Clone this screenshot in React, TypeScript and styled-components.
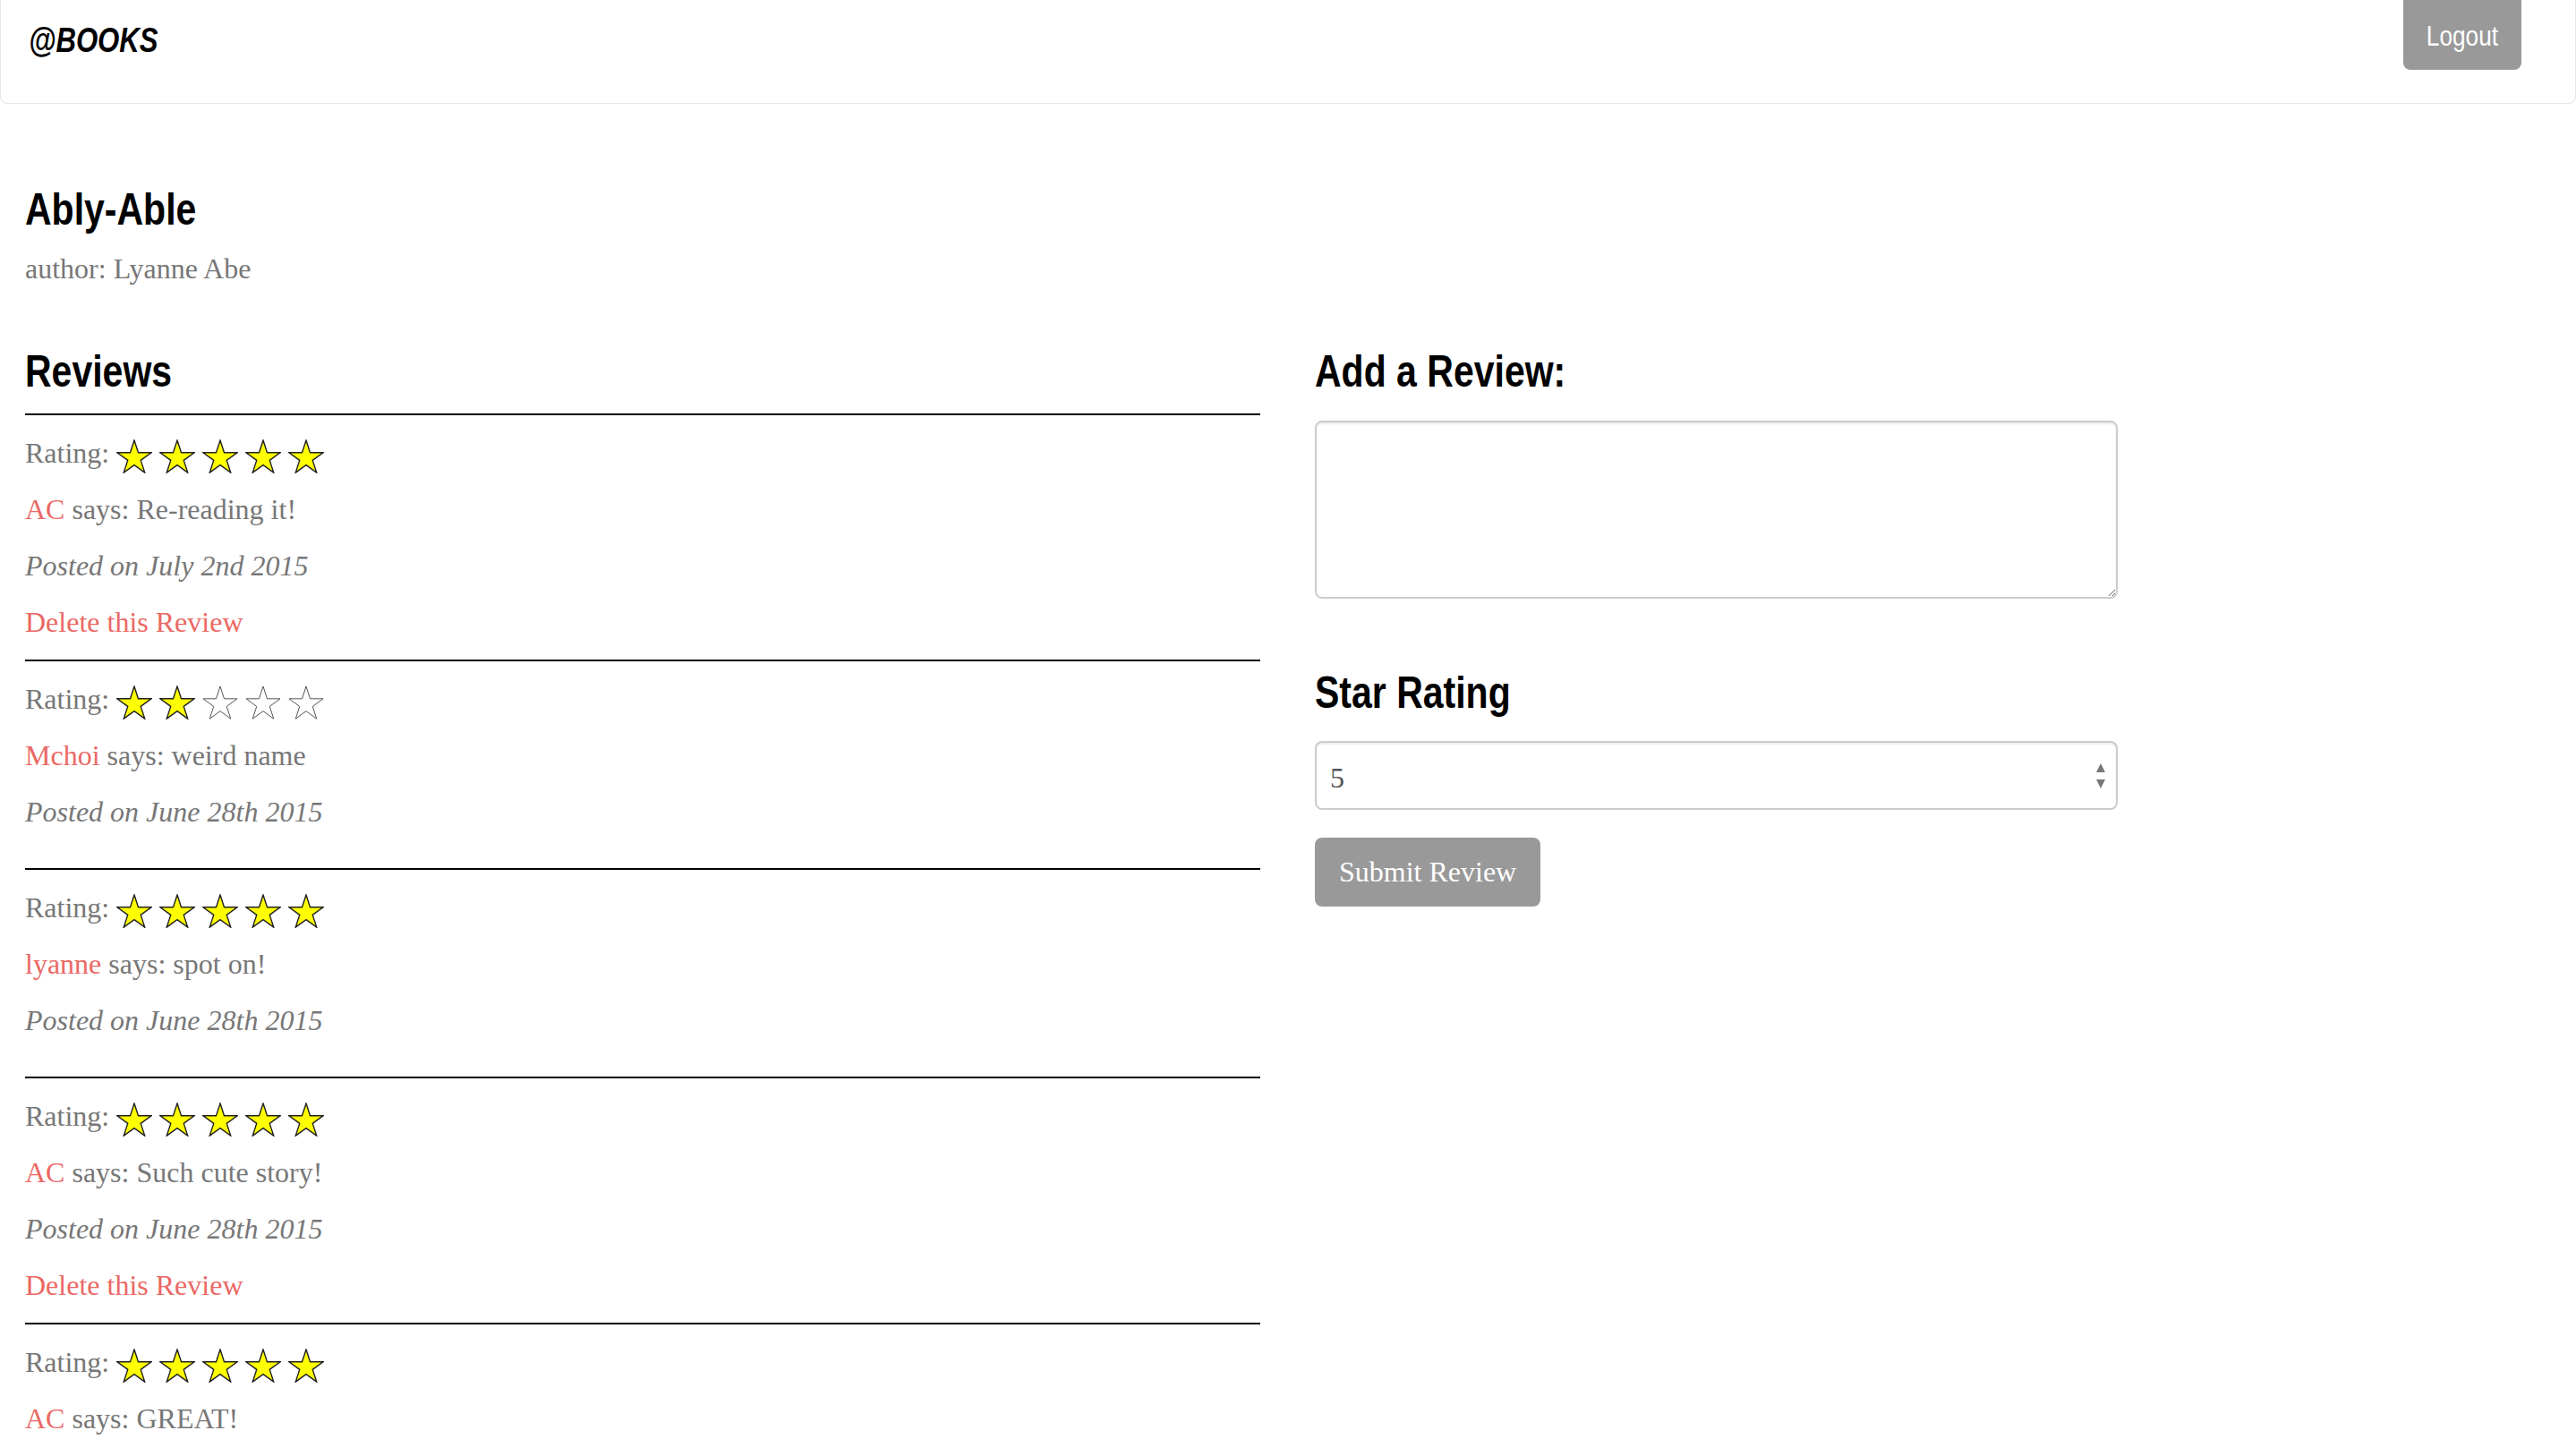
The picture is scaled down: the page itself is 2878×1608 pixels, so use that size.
import React from 'react';
import styled, { createGlobalStyle } from 'styled-components';

type Review = {
  user: string;
  text: string;
  rating: number;
  posted: string;
  mine: boolean;
};

const reviews: Review[] = [
  { user: 'AC', text: 'Re-reading it!', rating: 5, posted: 'July 2nd 2015', mine: true },
  { user: 'Mchoi', text: 'weird name', rating: 2, posted: 'June 28th 2015', mine: false },
  { user: 'lyanne', text: 'spot on!', rating: 5, posted: 'June 28th 2015', mine: false },
  { user: 'AC', text: 'Such cute story!', rating: 5, posted: 'June 28th 2015', mine: true },
  { user: 'AC', text: 'GREAT!', rating: 5, posted: 'June 28th 2015', mine: true },
];

// no narrow face installed, so the condensed headings are Liberation Sans squeezed horizontally
const headingFont = `"Liberation Sans", Arial, sans-serif`;
const narrow = 'scaleX(0.82)';
const bodyFont = `"Liberation Serif", "Times New Roman", serif`;

const GlobalStyle = createGlobalStyle`
  html, body {
    margin: 0;
    padding: 0;
    background: #fff;
  }
  body {
    font-family: ${bodyFont};
    font-size: 32px;
    color: #777;
  }
  * {
    box-sizing: border-box;
  }
`;

const Navbar = styled.header`
  display: flex;
  justify-content: space-between;
  align-items: flex-start;
  height: 116px;
  border: 1px solid #e6e6e6;
  border-top: 0;
  border-radius: 0 0 8px 8px;
  background: #fff;
`;

const Brand = styled.a`
  display: inline-block;
  margin: 26px 0 0 31px;
  font-family: ${headingFont};
  font-style: italic;
  font-weight: 700;
  font-size: 38px;
  line-height: 38px;
  color: #000;
  text-decoration: none;
  transform: ${narrow};
  transform-origin: left center;
`;

const LogoutButton = styled.button`
  width: 132px;
  height: 78px;
  margin-right: 60px;
  padding: 3px 0 0;
  border: 0;
  border-radius: 0 0 8px 8px;
  background: #999;
  color: #fff;
  font-family: ${headingFont};
  font-size: 32px;

  span {
    display: inline-block;
    transform: ${narrow};
  }
`;

const Main = styled.main`
  padding: 0 28px;
`;

const Title = styled.h1`
  margin: 91px 0 0;
  font-family: ${headingFont};
  font-weight: 700;
  font-size: 50px;
  line-height: 55px;
  color: #000;
  transform: ${narrow};
  transform-origin: left center;
`;

const Author = styled.p`
  margin: 16px 0 0;
  line-height: 45px;
`;

const Columns = styled.div`
  display: grid;
  grid-template-columns: 1380px 897px;
  column-gap: 61px;
  margin-top: 65px;
  align-items: start;
`;

const SectionHeading = styled.h2<{ $gap: number }>`
  margin: 0 0 ${(p) => p.$gap}px;
  font-family: ${headingFont};
  font-weight: 700;
  font-size: 50px;
  line-height: 55px;
  color: #000;
  transform: ${narrow};
  transform-origin: left center;
`;

const ReviewItem = styled.article`
  border-top: 2px solid #000;
  padding: 20px 0 19px;

  & > p:last-child {
    margin-bottom: 21px;
  }
`;

const Line = styled.p<{ $italic?: boolean }>`
  margin: 0 0 18px;
  line-height: 45px;
  font-style: ${(p) => (p.$italic ? 'italic' : 'normal')};
`;

const UserLink = styled.a`
  color: #eb6864;
  text-decoration: none;
`;

const DeleteLink = styled.a`
  display: block;
  line-height: 45px;
  color: #eb6864;
  text-decoration: none;
`;

const StarSvg = styled.svg`
  width: 40px;
  height: 38px;
  vertical-align: middle;
`;

const ReviewText = styled.textarea`
  display: block;
  width: 100%;
  height: 199px;
  margin: 0 0 78px;
  border: 2px solid #ccc;
  border-radius: 8px;
  box-shadow: inset 0 2px 2px rgba(0, 0, 0, 0.075);
  font-family: ${bodyFont};
  font-size: 32px;
  color: #555;
`;

const SelectWrap = styled.div`
  position: relative;
  height: 77px;
  margin-bottom: 31px;
`;

const Select = styled.select`
  width: 100%;
  height: 100%;
  padding: 5px 15px 0;
  appearance: none;
  border: 2px solid #ccc;
  border-radius: 8px;
  background: #fff;
  box-shadow: inset 0 2px 2px rgba(0, 0, 0, 0.075);
  font-family: ${bodyFont};
  font-size: 32px;
  color: #555;
`;

const SelectArrows = styled.svg`
  position: absolute;
  right: 13px;
  top: 25px;
  width: 12px;
  height: 28px;
  pointer-events: none;
`;

const SubmitButton = styled.button`
  height: 77px;
  padding: 0 27px;
  border: 0;
  border-radius: 8px;
  background: #999;
  color: #fff;
  font-family: ${bodyFont};
  font-size: 32px;
`;

const Star: React.FC<{ filled: boolean }> = ({ filled }) => (
  <StarSvg viewBox="0 0 40 38">
    <polygon
      points="20,1 24.49,14.82 39.02,14.82 27.26,23.36 31.76,37.18 20,28.64 8.24,37.18 12.74,23.36 0.98,14.82 15.51,14.82"
      fill={filled ? '#ffff00' : '#fff'}
      stroke={filled ? '#222' : '#555'}
      strokeWidth={filled ? 1.4 : 1}
    />
  </StarSvg>
);

const ReviewEntry: React.FC<{ review: Review }> = ({ review }) => (
  <ReviewItem>
    <Line>
      Rating:
      {[1, 2, 3, 4, 5].map((n) => (
        <React.Fragment key={n}>
          {' '}
          <Star filled={n <= review.rating} />
        </React.Fragment>
      ))}
    </Line>
    <Line>
      <UserLink href="#">{review.user}</UserLink> says: {review.text}
    </Line>
    <Line $italic>Posted on {review.posted}</Line>
    {review.mine && <DeleteLink href="#">Delete this Review</DeleteLink>}
  </ReviewItem>
);

export default function App() {
  return (
    <>
      <GlobalStyle />
      <Navbar>
        <Brand href="#">@BOOKS</Brand>
        <LogoutButton>
          <span>Logout</span>
        </LogoutButton>
      </Navbar>
      <Main>
        <Title>Ably-Able</Title>
        <Author>author: Lyanne Abe</Author>
        <Columns>
          <section>
            <SectionHeading $gap={19}>Reviews</SectionHeading>
            {reviews.map((r, i) => (
              <ReviewEntry review={r} key={i} />
            ))}
          </section>
          <form onSubmit={(e) => e.preventDefault()}>
            <SectionHeading $gap={27}>Add a Review:</SectionHeading>
            <ReviewText />
            <SectionHeading $gap={26}>Star Rating</SectionHeading>
            <SelectWrap>
              <Select defaultValue="5">
                <option>1</option>
                <option>2</option>
                <option>3</option>
                <option>4</option>
                <option>5</option>
              </Select>
              <SelectArrows viewBox="0 0 12 28">
                <polygon points="6,0 11,10 1,10" fill="#777" />
                <polygon points="1,18 11,18 6,28" fill="#777" />
              </SelectArrows>
            </SelectWrap>
            <SubmitButton type="submit">Submit Review</SubmitButton>
          </form>
        </Columns>
      </Main>
    </>
  );
}
